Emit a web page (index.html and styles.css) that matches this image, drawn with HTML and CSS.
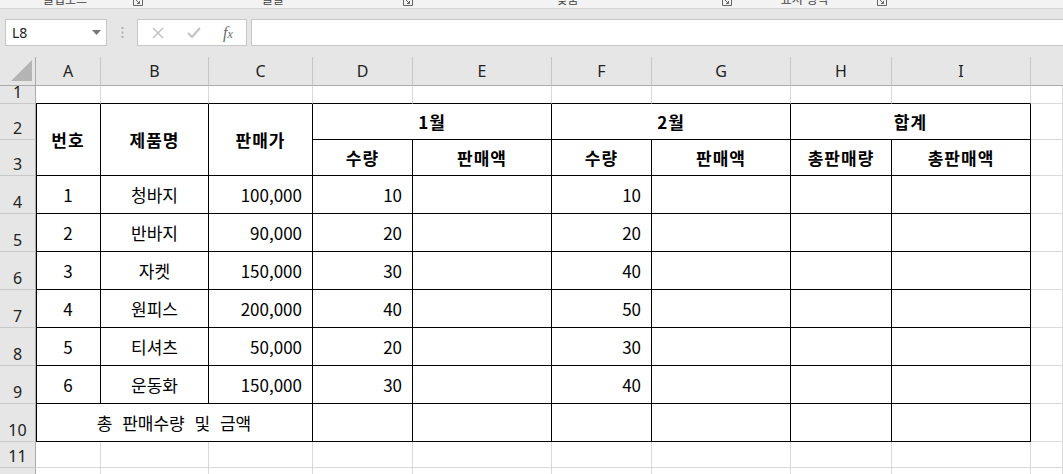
FILE: index.html
```html
<!DOCTYPE html>
<html lang="ko">
<head>
<meta charset="utf-8">
<title>Sheet</title>
<link rel="stylesheet" href="styles.css">
</head>
<body>
<div class="ribbon-edge">
  <div class="grp grp1"><span class="glabel">클립보드</span><span class="launcher"><svg width="10" height="8" viewBox="0 0 10 8"><path d="M0.5 0 V5.5 H9.5 V0" fill="none" stroke="#666"/><path d="M3 0 L6.5 3.5 M6.5 1 V3.5 H4" fill="none" stroke="#666"/></svg></span></div>
  <div class="grp grp2"><span class="glabel">글꼴</span><span class="launcher"><svg width="10" height="8" viewBox="0 0 10 8"><path d="M0.5 0 V5.5 H9.5 V0" fill="none" stroke="#666"/><path d="M3 0 L6.5 3.5 M6.5 1 V3.5 H4" fill="none" stroke="#666"/></svg></span></div>
  <div class="grp grp3"><span class="glabel">맞춤</span><span class="launcher"><svg width="10" height="8" viewBox="0 0 10 8"><path d="M0.5 0 V5.5 H9.5 V0" fill="none" stroke="#666"/><path d="M3 0 L6.5 3.5 M6.5 1 V3.5 H4" fill="none" stroke="#666"/></svg></span></div>
  <div class="grp grp4"><span class="glabel">표시 형식</span><span class="launcher"><svg width="10" height="8" viewBox="0 0 10 8"><path d="M0.5 0 V5.5 H9.5 V0" fill="none" stroke="#666"/><path d="M3 0 L6.5 3.5 M6.5 1 V3.5 H4" fill="none" stroke="#666"/></svg></span></div>
</div>
<div class="fbar">
  <div class="namebox"><span class="nb-text">L8</span><svg class="nb-arrow" width="9" height="5" viewBox="0 0 9 5"><path d="M0 0 H9 L4.5 5 Z" fill="#777"/></svg></div>
  <div class="vdots"><svg width="3" height="11" viewBox="0 0 3 11"><rect x="0.5" y="0" width="2" height="2" fill="#b0b0b0"/><rect x="0.5" y="4.5" width="2" height="2" fill="#b0b0b0"/><rect x="0.5" y="9" width="2" height="2" fill="#b0b0b0"/></svg></div>
  <div class="fbtns">
    <svg class="ico-x" width="12" height="12" viewBox="0 0 12 12"><path d="M1 1 L11 11 M11 1 L1 11" stroke="#c2c2c2" stroke-width="1.5" fill="none"/></svg>
    <svg class="ico-ok" width="14" height="11" viewBox="0 0 14 11"><path d="M1 6 L5 10 L13 1" stroke="#c2c2c2" stroke-width="2" fill="none"/></svg>
    <span class="ico-fx">f<span class="fx-x">x</span></span>
  </div>
  <div class="finput"></div>
</div>
<div class="sheet">
  <div class="corner"><svg width="22" height="22" viewBox="0 0 22 22"><path d="M21 0 V21 H0 Z" fill="#b4b4b4"/></svg></div>
  <div class="ch">A</div><div class="ch">B</div><div class="ch">C</div><div class="ch">D</div><div class="ch">E</div><div class="ch">F</div><div class="ch">G</div><div class="ch">H</div><div class="ch">I</div><div class="ch ch-last"></div>

  <div class="rh">1</div>
  <div class="c top"></div><div class="c top"></div><div class="c top"></div><div class="c top"></div><div class="c top"></div><div class="c top"></div><div class="c top"></div><div class="c top"></div><div class="c top"></div><div class="c"></div>

  <div class="rh">2</div>
  <div class="c t first r2 b ctr">번호</div>
  <div class="c t r2 b ctr">제품명</div>
  <div class="c t r2 b ctr">판매가</div>
  <div class="c t s2 b ctr">1월</div>
  <div class="c t s2 b ctr">2월</div>
  <div class="c t s2 b ctr">합계</div>
  <div class="c"></div>

  <div class="rh">3</div>
  <div class="c t b ctr">수량</div>
  <div class="c t b ctr">판매액</div>
  <div class="c t b ctr">수량</div>
  <div class="c t b ctr">판매액</div>
  <div class="c t b ctr">총판매량</div>
  <div class="c t b ctr">총판매액</div>
  <div class="c"></div>

  <div class="rh">4</div>
  <div class="c t first ctr">1</div><div class="c t ctr">청바지</div><div class="c t num">100,000</div><div class="c t num">10</div><div class="c t"></div><div class="c t num">10</div><div class="c t"></div><div class="c t"></div><div class="c t"></div><div class="c"></div>

  <div class="rh">5</div>
  <div class="c t first ctr">2</div><div class="c t ctr">반바지</div><div class="c t num">90,000</div><div class="c t num">20</div><div class="c t"></div><div class="c t num">20</div><div class="c t"></div><div class="c t"></div><div class="c t"></div><div class="c"></div>

  <div class="rh">6</div>
  <div class="c t first ctr">3</div><div class="c t ctr">자켓</div><div class="c t num">150,000</div><div class="c t num">30</div><div class="c t"></div><div class="c t num">40</div><div class="c t"></div><div class="c t"></div><div class="c t"></div><div class="c"></div>

  <div class="rh">7</div>
  <div class="c t first ctr">4</div><div class="c t ctr">원피스</div><div class="c t num">200,000</div><div class="c t num">40</div><div class="c t"></div><div class="c t num">50</div><div class="c t"></div><div class="c t"></div><div class="c t"></div><div class="c"></div>

  <div class="rh">8</div>
  <div class="c t first ctr">5</div><div class="c t ctr">티셔츠</div><div class="c t num">50,000</div><div class="c t num">20</div><div class="c t"></div><div class="c t num">30</div><div class="c t"></div><div class="c t"></div><div class="c t"></div><div class="c"></div>

  <div class="rh">9</div>
  <div class="c t first ctr">6</div><div class="c t ctr">운동화</div><div class="c t num">150,000</div><div class="c t num">30</div><div class="c t"></div><div class="c t num">40</div><div class="c t"></div><div class="c t"></div><div class="c t"></div><div class="c"></div>

  <div class="rh">10</div>
  <div class="c t first s3 ctr sp">총 판매수량 및 금액</div><div class="c t"></div><div class="c t"></div><div class="c t"></div><div class="c t"></div><div class="c t"></div><div class="c t"></div><div class="c"></div>

  <div class="rh">11</div>
  <div class="c"></div><div class="c"></div><div class="c"></div><div class="c"></div><div class="c"></div><div class="c"></div><div class="c"></div><div class="c"></div><div class="c"></div><div class="c"></div>

  <div class="rh">12</div>
  <div class="c"></div><div class="c"></div><div class="c"></div><div class="c"></div><div class="c"></div><div class="c"></div><div class="c"></div><div class="c"></div><div class="c"></div><div class="c"></div>
</div>
</body>
</html>
```

FILE: styles.css
```css
* { box-sizing: border-box; }
html, body { margin: 0; padding: 0; }
body {
  width: 1063px;
  height: 474px;
  overflow: hidden;
  background: #ffffff;
  font-family: "Noto Sans CJK KR", "Noto Sans", sans-serif;
  color: #000;
}

/* ribbon bottom edge */
.ribbon-edge {
  height: 9px;
  background: #f3f3f3;
  border-bottom: 1px solid #d6d6d6;
  display: flex;
  overflow: hidden;
}
.grp { display: flex; height: 8px; overflow: hidden; }
.grp1 { width: 146px; }
.grp2 { width: 270px; }
.grp3 { width: 319px; }
.grp4 { width: 155px; }
.glabel {
  flex: 1;
  text-align: center;
  font-size: 12px;
  line-height: 12px;
  margin-top: -7px;
  color: #444;
}
.launcher { width: 16px; display: flex; justify-content: center; align-items: flex-start; }

/* formula bar */
.fbar {
  height: 48px;
  background: #e6e6e6;
  display: flex;
  align-items: flex-start;
  padding-top: 10px;
}
.namebox {
  width: 102px;
  height: 27px;
  margin-left: 5px;
  background: #fff;
  border: 1px solid #c6c6c6;
  display: flex;
  align-items: center;
  justify-content: space-between;
  padding: 0 5px 0 6px;
}
.nb-text { font-family: "Noto Sans", "Open Sans", sans-serif; font-size: 14px; color: #222; }
.vdots { width: 30px; height: 27px; display: flex; align-items: center; justify-content: center; }
.fbtns {
  width: 110px;
  height: 27px;
  background: #fff;
  border: 1px solid #c6c6c6;
  display: flex;
  align-items: center;
  padding-left: 14px;
}
.ico-x { margin-right: 23px; }
.ico-ok { margin-right: 22px; }
.ico-fx {
  font-family: "Liberation Serif", serif;
  font-style: italic;
  font-size: 16px;
  color: #6a6a6a;
  line-height: 1;
}
.fx-x { font-size: 12px; }
.finput {
  flex: 1;
  height: 27px;
  margin-left: 4px;
  background: #fff;
  border: 1px solid #c6c6c6;
  border-right: none;
}

/* sheet grid */
.sheet {
  display: grid;
  grid-template-columns: 36px 65px 108px 104px 100px 139px 100px 139px 101px 139px 1fr;
  grid-template-rows: 29px 18px 36px 36px 38px 38px 38px 38px 38px 38px 38px 26px 26px;
}
.corner {
  background: #e6e6e6;
  border-right: 1px solid #ababab;
  border-bottom: 1px solid #ababab;
  display: flex;
  align-items: flex-end;
  justify-content: flex-end;
  padding: 0 2px 3px 0;
}
.ch {
  background: #e6e6e6;
  border-bottom: 1px solid #ababab;
  border-right: 1px solid #c6c6c6;
  display: flex;
  align-items: center;
  justify-content: center;
  font-family: "Noto Sans", "Open Sans", sans-serif;
  font-size: 16px;
  color: #222;
}
.ch-last { border-right: none; }
.rh {
  background: #e6e6e6;
  border-right: 1px solid #ababab;
  border-bottom: 1px solid #c9c9c9;
  display: flex;
  align-items: flex-end;
  justify-content: center;
  font-family: "Noto Sans", "Open Sans", sans-serif;
  font-size: 16px;
  line-height: 21px;
  color: #222;
}
.c {
  border-right: 1px solid #d9d9d9;
  border-bottom: 1px solid #d9d9d9;
  display: flex;
  align-items: center;
  font-size: 17px;
  line-height: 20px;
  white-space: nowrap;
  overflow: hidden;
}
.c.top { border-bottom-color: #000; }
.c.t { border-right-color: #000; border-bottom-color: #000; }
.c.first { box-shadow: inset 1px 0 0 #000; }
.r2 { grid-row: span 2; }
.s2 { grid-column: span 2; }
.s3 { grid-column: span 3; }
.ctr { justify-content: center; }
.num { justify-content: flex-end; padding-right: 10px; }
.b { font-weight: 700; letter-spacing: 1px; }
.sp { word-spacing: 5px; }
```
